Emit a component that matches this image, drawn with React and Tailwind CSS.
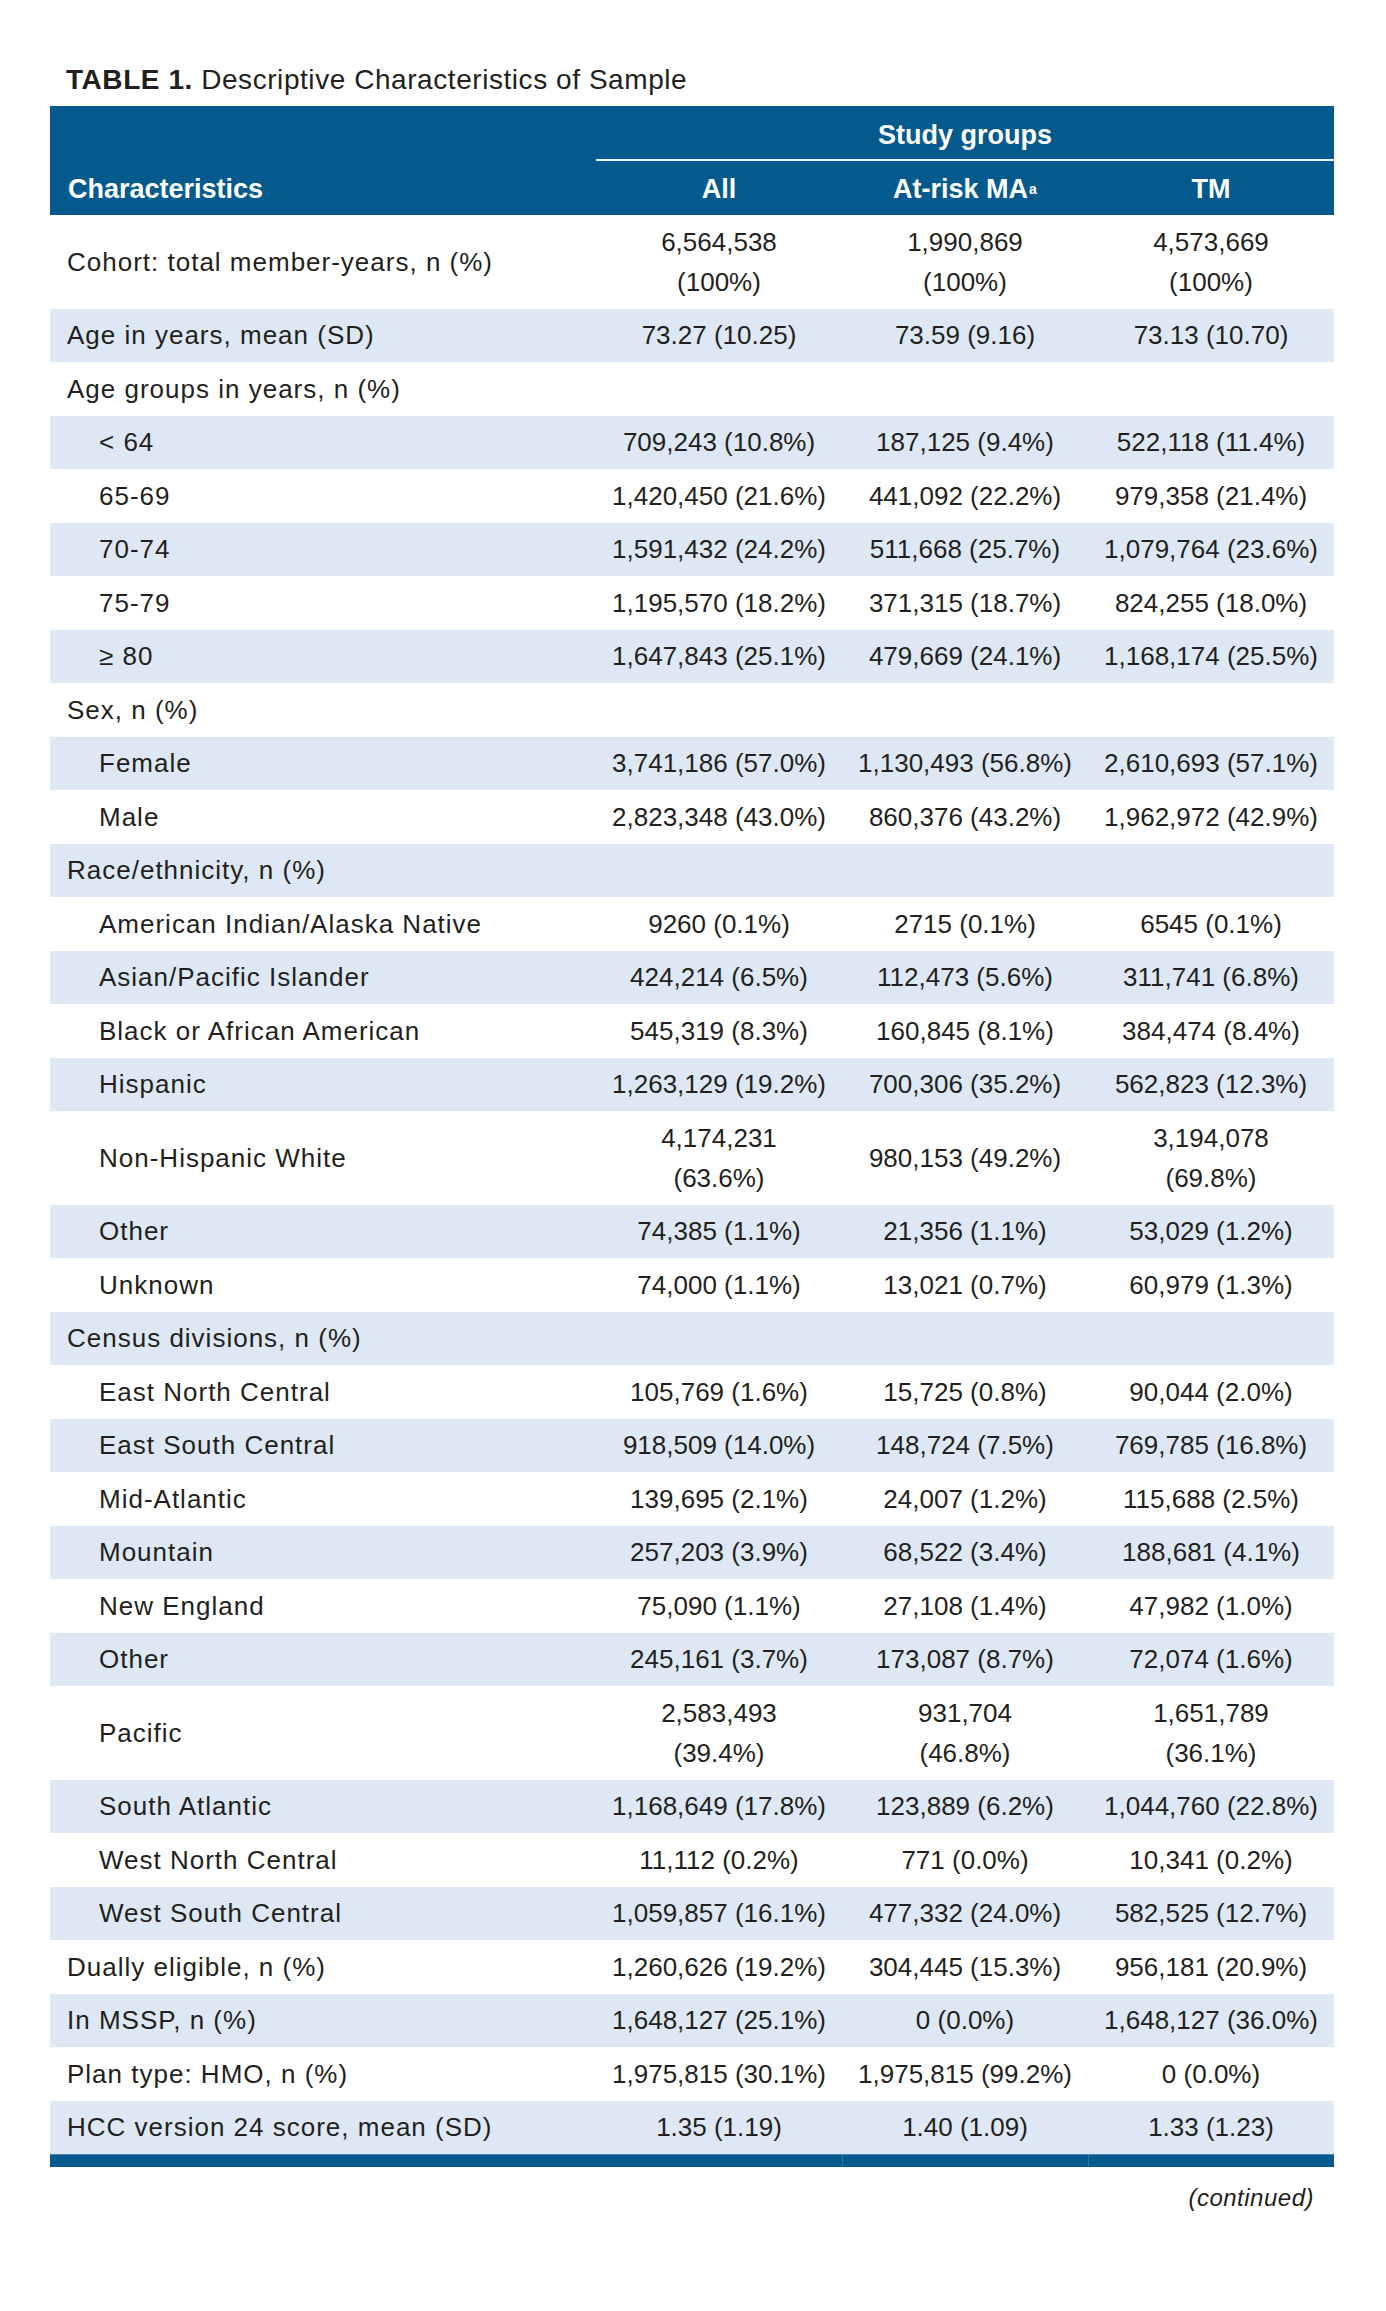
import React from "react";

const rows = [
  { label: "Cohort: total member-years, n (%)", vals: [["6,564,538", "(100%)"], ["1,990,869", "(100%)"], ["4,573,669", "(100%)"]] },
  { label: "Age in years, mean (SD)", vals: ["73.27 (10.25)", "73.59 (9.16)", "73.13 (10.70)"] },
  { label: "Age groups in years, n (%)", vals: ["", "", ""] },
  { label: "< 64", sub: true, vals: ["709,243 (10.8%)", "187,125 (9.4%)", "522,118 (11.4%)"] },
  { label: "65-69", sub: true, vals: ["1,420,450 (21.6%)", "441,092 (22.2%)", "979,358 (21.4%)"] },
  { label: "70-74", sub: true, vals: ["1,591,432 (24.2%)", "511,668 (25.7%)", "1,079,764 (23.6%)"] },
  { label: "75-79", sub: true, vals: ["1,195,570 (18.2%)", "371,315 (18.7%)", "824,255 (18.0%)"] },
  { label: "≥ 80", sub: true, vals: ["1,647,843 (25.1%)", "479,669 (24.1%)", "1,168,174 (25.5%)"] },
  { label: "Sex, n (%)", vals: ["", "", ""] },
  { label: "Female", sub: true, vals: ["3,741,186 (57.0%)", "1,130,493 (56.8%)", "2,610,693 (57.1%)"] },
  { label: "Male", sub: true, vals: ["2,823,348 (43.0%)", "860,376 (43.2%)", "1,962,972 (42.9%)"] },
  { label: "Race/ethnicity, n (%)", vals: ["", "", ""] },
  { label: "American Indian/Alaska Native", sub: true, vals: ["9260 (0.1%)", "2715 (0.1%)", "6545 (0.1%)"] },
  { label: "Asian/Pacific Islander", sub: true, vals: ["424,214 (6.5%)", "112,473 (5.6%)", "311,741 (6.8%)"] },
  { label: "Black or African American", sub: true, vals: ["545,319 (8.3%)", "160,845 (8.1%)", "384,474 (8.4%)"] },
  { label: "Hispanic", sub: true, vals: ["1,263,129 (19.2%)", "700,306 (35.2%)", "562,823 (12.3%)"] },
  { label: "Non-Hispanic White", sub: true, vals: [["4,174,231", "(63.6%)"], "980,153 (49.2%)", ["3,194,078", "(69.8%)"]] },
  { label: "Other", sub: true, vals: ["74,385 (1.1%)", "21,356 (1.1%)", "53,029 (1.2%)"] },
  { label: "Unknown", sub: true, vals: ["74,000 (1.1%)", "13,021 (0.7%)", "60,979 (1.3%)"] },
  { label: "Census divisions, n (%)", vals: ["", "", ""] },
  { label: "East North Central", sub: true, vals: ["105,769 (1.6%)", "15,725 (0.8%)", "90,044 (2.0%)"] },
  { label: "East South Central", sub: true, vals: ["918,509 (14.0%)", "148,724 (7.5%)", "769,785 (16.8%)"] },
  { label: "Mid-Atlantic", sub: true, vals: ["139,695 (2.1%)", "24,007 (1.2%)", "115,688 (2.5%)"] },
  { label: "Mountain", sub: true, vals: ["257,203 (3.9%)", "68,522 (3.4%)", "188,681 (4.1%)"] },
  { label: "New England", sub: true, vals: ["75,090 (1.1%)", "27,108 (1.4%)", "47,982 (1.0%)"] },
  { label: "Other", sub: true, vals: ["245,161 (3.7%)", "173,087 (8.7%)", "72,074 (1.6%)"] },
  { label: "Pacific", sub: true, vals: [["2,583,493", "(39.4%)"], ["931,704", "(46.8%)"], ["1,651,789", "(36.1%)"]] },
  { label: "South Atlantic", sub: true, vals: ["1,168,649 (17.8%)", "123,889 (6.2%)", "1,044,760 (22.8%)"] },
  { label: "West North Central", sub: true, vals: ["11,112 (0.2%)", "771 (0.0%)", "10,341 (0.2%)"] },
  { label: "West South Central", sub: true, vals: ["1,059,857 (16.1%)", "477,332 (24.0%)", "582,525 (12.7%)"] },
  { label: "Dually eligible, n (%)", vals: ["1,260,626 (19.2%)", "304,445 (15.3%)", "956,181 (20.9%)"] },
  { label: "In MSSP, n (%)", vals: ["1,648,127 (25.1%)", "0 (0.0%)", "1,648,127 (36.0%)"] },
  { label: "Plan type: HMO, n (%)", vals: ["1,975,815 (30.1%)", "1,975,815 (99.2%)", "0 (0.0%)"] },
  { label: "HCC version 24 score, mean (SD)", vals: ["1.35 (1.19)", "1.40 (1.09)", "1.33 (1.23)"] },
];

const Cell = ({ val }) => {
  if (Array.isArray(val)) {
    return (
      <div className="text-center whitespace-nowrap">
        <div>{val[0]}</div>
        <div>{val[1]}</div>
      </div>
    );
  }
  return <div className="text-center whitespace-nowrap">{val}</div>;
};

export default function App() {
  return (
    <div
      className="w-[1386px] min-h-[2311px] bg-white text-[#231f20] pl-[50px] pr-[52px] pt-[63px]"
      style={{ fontFamily: '"Liberation Sans", Arial, sans-serif' }}
    >
      {/* titulo */}
      <h1 className="pl-[16px] text-[28px] leading-[34px] tracking-[0.02em] mb-[9px]">
        <span className="font-bold">TABLE 1.</span> Descriptive Characteristics of Sample
      </h1>

      {/* cabecalho */}
      <div className="flex bg-[#045a8d] text-white font-bold text-[27px] leading-[32px]">
        <div className="w-[546px] flex items-end pl-[18px] pb-[10px]">
          Characteristics
        </div>
        <div className="flex-1 flex flex-col">
          <div className="h-[55px] pt-[4px] flex items-center justify-center border-b-2 border-[#eef3f8]">
            Study groups
          </div>
          <div className="h-[54px] pt-[2px] grid grid-cols-3 items-center">
            <div className="text-center">All</div>
            <div className="text-center">
              At-risk MA<sup className="text-[14px] font-bold ml-[1px] relative top-[-4px]">a</sup>
            </div>
            <div className="text-center">TM</div>
          </div>
        </div>
      </div>

      {/* linhas */}
      <div className="text-[26px] leading-[40px]">
        {rows.map((row, i) => (
          <div
            key={i}
            className={`grid grid-cols-[546px_246px_246px_246px] items-center py-[6.75px] ${
              i % 2 === 1 ? "bg-[#dde8f4]" : "bg-white"
            }`}
          >
            <div
              className={`tracking-[1px] whitespace-nowrap ${
                row.sub ? "pl-[49px]" : "pl-[17px]"
              }`}
            >
              {row.label}
            </div>
            {row.vals.map((v, j) => (
              <Cell key={j} val={v} />
            ))}
          </div>
        ))}
      </div>

      {/* barra final */}
      <div className="grid grid-cols-[546px_246px_246px_246px] h-[13px] bg-[#035a8e] border-t border-[#4f84ad]">
        <div />
        <div />
        <div className="border-l border-[#3a76a3]" />
        <div className="border-l border-[#3a76a3]" />
      </div>

      <div className="flex justify-end pr-[20px] mt-[16px]">
        <span className="italic text-[24px] leading-[30px] tracking-[0.5px]">(continued)</span>
      </div>
    </div>
  );
}
